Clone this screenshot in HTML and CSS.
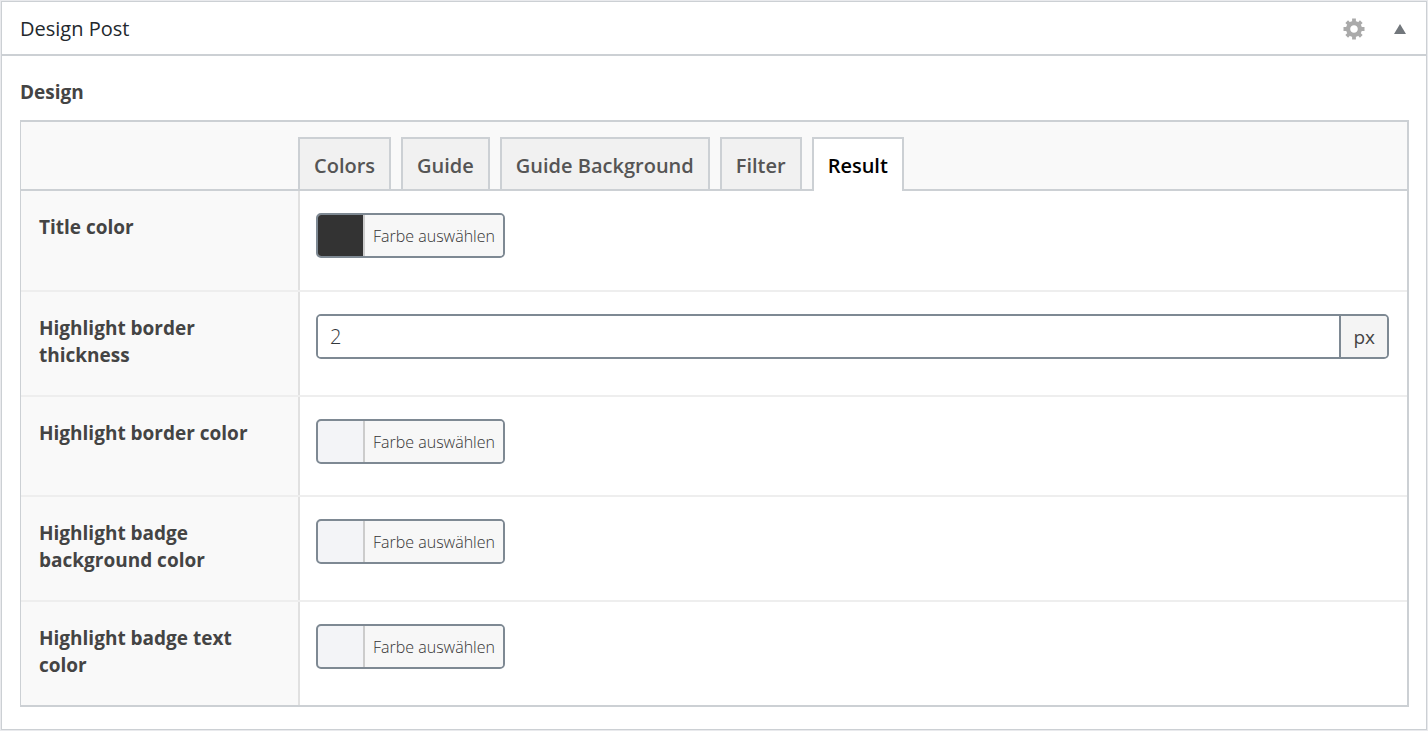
FILE: index.html
```html
<!DOCTYPE html>
<html lang="de">
<head>
    <meta charset="UTF-8">
    <meta name="viewport" content="width=device-width, initial-scale=1.0">
    <title>Design Post</title>
    <link rel="stylesheet" href="styles.css">
</head>
<body>
    <section class="postbox">
        <header class="postbox-header">
            <h2>Design Post</h2>
            <a class="edit-link" href="#" aria-label="Edit field group">
                <svg width="22" height="22" viewBox="-11 -11 22 22" stroke="#aaa" fill="none">
                    <circle r="5.9" stroke-width="4.2"/>
                    <path stroke-width="3.8" d="M0-10.5V-7M0 10.5V7M-10.5 0H-7M10.5 0H7M-7.3-7.3L-5-5M7.3 7.3L5 5M-7.3 7.3L-5 5M7.3-7.3L5-5"/>
                </svg>
            </a>
            <button type="button" class="toggle" aria-label="Toggle panel">
                <svg width="12" height="10" viewBox="0 0 12 10">
                    <path fill="#72777c" d="M6 0l6 10H0z"/>
                </svg>
            </button>
        </header>

        <div class="inside">
            <h3>Design</h3>

            <div class="fields">
                <!-- Tabs -->
                <nav class="tabs">
                    <a href="#">Colors</a>
                    <a href="#">Guide</a>
                    <a href="#">Guide Background</a>
                    <a href="#">Filter</a>
                    <a href="#" class="active">Result</a>
                </nav>

                <!-- Result -->
                <div class="rows">
                    <div class="field">
                        <label for="title-color">Title color</label>
                        <div class="control">
                            <button type="button" class="color-button" id="title-color">
                                <span class="swatch dark"></span>
                                <span class="color-text">Farbe auswählen</span>
                            </button>
                        </div>
                    </div>
                    <div class="field">
                        <label for="border-thickness">Highlight border thickness</label>
                        <div class="control">
                            <div class="input-group">
                                <input type="text" id="border-thickness" value="2">
                                <span class="append">px</span>
                            </div>
                        </div>
                    </div>
                    <div class="field">
                        <label for="border-color">Highlight border color</label>
                        <div class="control">
                            <button type="button" class="color-button" id="border-color">
                                <span class="swatch"></span>
                                <span class="color-text">Farbe auswählen</span>
                            </button>
                        </div>
                    </div>
                    <div class="field">
                        <label for="badge-background">Highlight badge background color</label>
                        <div class="control">
                            <button type="button" class="color-button" id="badge-background">
                                <span class="swatch"></span>
                                <span class="color-text">Farbe auswählen</span>
                            </button>
                        </div>
                    </div>
                    <div class="field">
                        <label for="badge-text">Highlight badge text color</label>
                        <div class="control">
                            <button type="button" class="color-button" id="badge-text">
                                <span class="swatch"></span>
                                <span class="color-text">Farbe auswählen</span>
                            </button>
                        </div>
                    </div>
                </div>
            </div>
        </div>
    </section>
</body>
</html>
```
FILE: styles.css
```css
* {
    box-sizing: border-box;
}

body {
    margin: 0;
    padding: 1px;
    background-color: #e9eaed;
    color: #444;
    font-family: "Segoe UI", "Open Sans", sans-serif;
    font-size: 19px;
    line-height: 27px;
}

.postbox {
    background-color: #fff;
    border: 1px solid #ccd0d4;
}

.postbox-header {
    display: flex;
    align-items: center;
    height: 54px;
    padding: 0 20px 0 18px;
    border-bottom: 2px solid #ccd0d4;
}

h2 {
    flex: 1;
    margin: 0;
    color: #23282d;
    font-size: 20px;
    font-weight: 400;
}

.edit-link {
    display: flex;
    margin-right: 29px;
    padding-top: 2px;
}

.toggle {
    display: flex;
    padding: 2px 0 0;
    border: none;
    background: none;
    cursor: pointer;
}

.inside {
    padding: 23px 17px 22px 18px;
}

h3 {
    margin: 0 0 14px;
    font-size: 19px;
    font-weight: 700;
}

.fields {
    border: 2px solid #ccd0d4;
    border-left-width: 1px;
}

.tabs {
    display: flex;
    gap: 10px;
    padding: 15px 0 0 277px;
    background-color: #f9f9f9;
    border-bottom: 2px solid #ccd0d4;
}

.tabs a {
    height: 52px;
    padding: 13px 14px 0;
    border: 2px solid #ccd0d4;
    border-bottom: none;
    background-color: #f1f1f1;
    color: #555;
    font-size: 20px;
    font-weight: 600;
    text-decoration: none;
}

/* the open tab covers the line under the bar */
.tabs a.active {
    height: 54px;
    margin-bottom: -2px;
    background-color: #fff;
    color: #000;
}

.field {
    display: flex;
    border-top: 2px solid #eee;
}

.field:first-child {
    min-height: 99px;
    border-top: none;
}

.field label {
    width: 277px;
    padding: 23px 30px 26px 18px;
    background-color: #f9f9f9;
    font-weight: 700;
}

.control {
    flex: 1;
    padding: 22px 18px 31px 16px;
    border-left: 2px solid #e1e1e1;
}

.color-button {
    display: flex;
    height: 45px;
    padding: 0;
    overflow: hidden;
    border: 2px solid #7e8993;
    border-radius: 5px;
    background-color: #f3f4f7;
    font-family: inherit;
    cursor: pointer;
}

.swatch {
    width: 45px;
    height: 41px;
}

.swatch.dark {
    background-color: #333;
}

.color-text {
    height: 41px;
    padding: 0 8px;
    border-left: 2px solid #ccc;
    background-color: #f7f7f7;
    color: #333;
    font-size: 16px;
    font-weight: 300;
    line-height: 43px;
}

.input-group {
    display: flex;
    height: 45px;
    overflow: hidden;
    border: 2px solid #7e8993;
    border-radius: 5px;
}

.input-group input {
    flex: 1;
    min-width: 0;
    padding: 0 12px;
    border: none;
    color: #32373c;
    font-family: inherit;
    font-size: 20px;
    font-weight: 300;
}

.append {
    padding: 0 12px;
    border-left: 2px solid #7e8993;
    background-color: #f4f4f4;
    font-size: 19px;
    line-height: 42px;
}
```
